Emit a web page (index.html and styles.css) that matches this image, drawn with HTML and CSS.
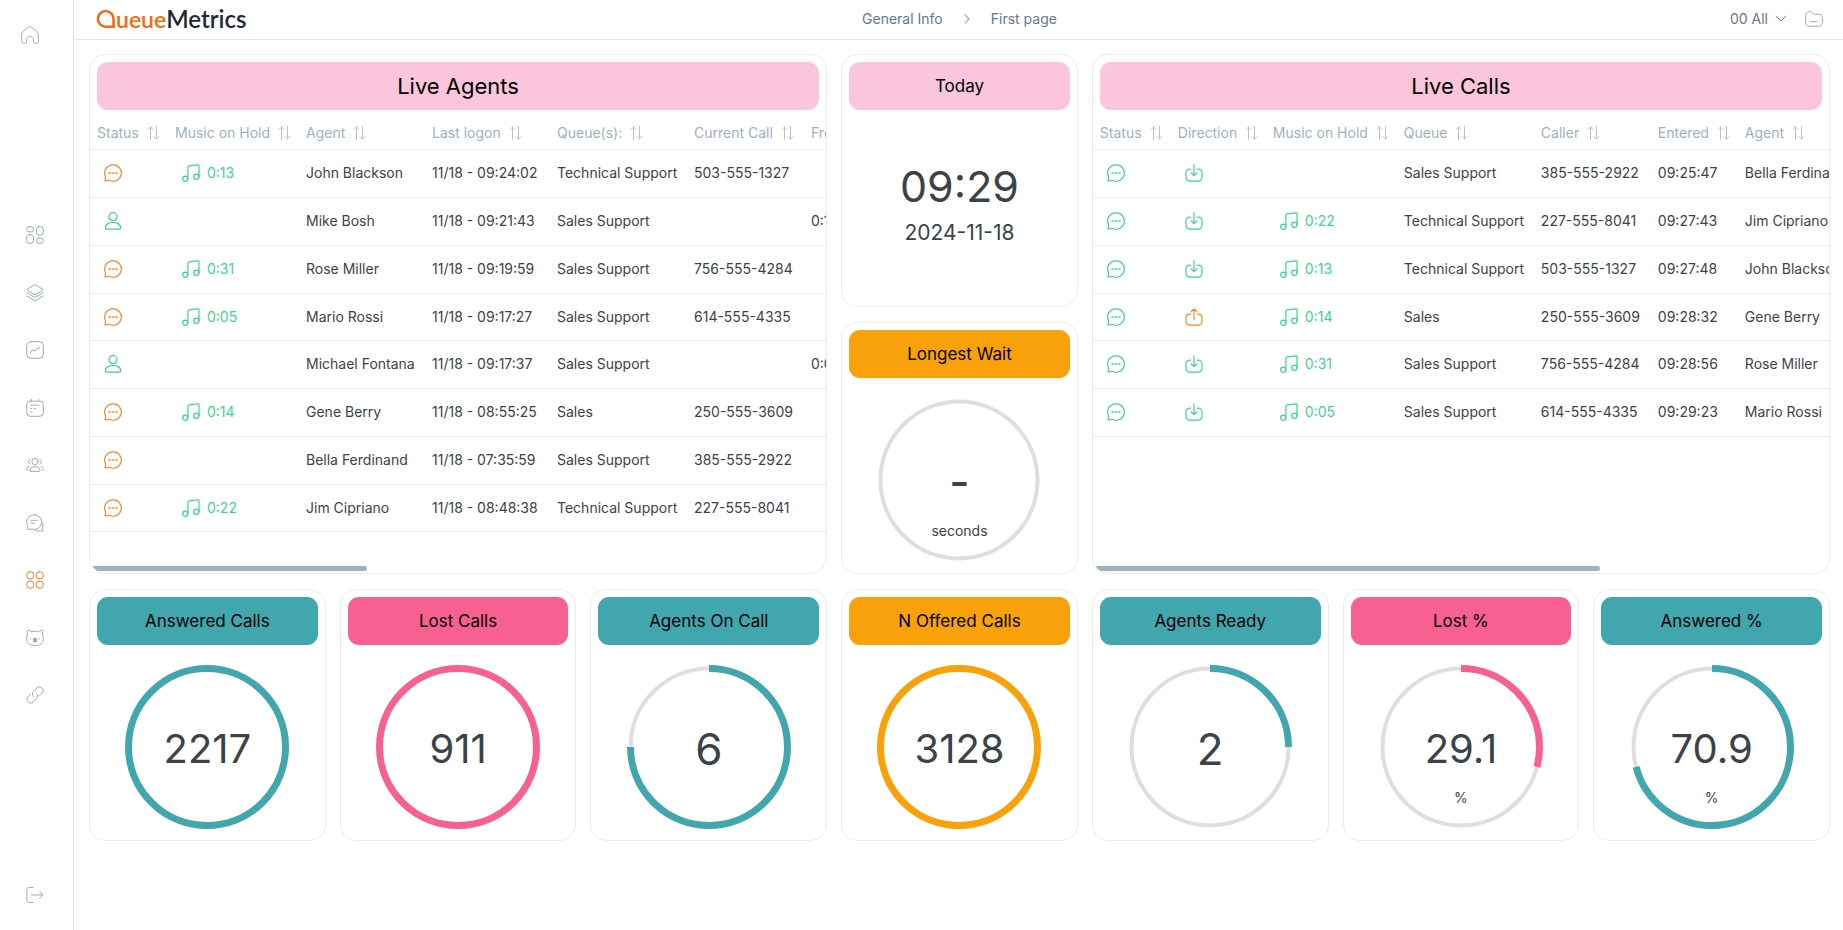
FILE: index.html
```html
<!DOCTYPE html>
<html lang="en">
<head>
<meta charset="utf-8">
<meta name="viewport" content="width=device-width, initial-scale=1">
<title>QueueMetrics - First page</title>
<link rel="stylesheet" href="styles.css">
</head>
<body>
<svg class="sprite" aria-hidden="true">
  <symbol id="i-sort" viewBox="0 0 13 14"><path d="M3.5 13.5V1M1 3.5 3.5 1 6 3.5M9.5.5V13M7 10.5 9.5 13l2.5-2.5"/></symbol>
  <symbol id="i-chat" viewBox="0 0 18 18"><path d="M9 .8a8.2 8.2 0 1 1-3.6 15.5c-1.200-.3-2.900 1-4.200.6-.6-.3-.1-1.200.2-2.300.3-1.100.2-1.700-.1-2.400A8.200 8.200 0 0 1 9 .8Z"/><path class="dots" d="M5.100 9h1M8.500 9h1M11.900 9h1"/></symbol>
  <symbol id="i-user" viewBox="0 0 18 18"><circle cx="9" cy="4.700" r="4"/><path d="M1.300 15.500c0-3 3.400-5 7.700-5s7.700 2 7.700 5c0 1-.6 1.700-1.700 1.700H3c-1.100 0-1.700-.7-1.700-1.700Z"/></symbol>
  <symbol id="i-music" viewBox="0 0 18 18"><circle cx="3.300" cy="14.800" r="2.600"/><circle cx="14.400" cy="12.700" r="2.600"/><path d="M5.900 14.800V3.500c0-.9.4-1.500 1.300-1.600l8.500-1.100c.8-.1 1.300.2 1.300 1v10.900"/></symbol>
  <symbol id="i-in" viewBox="0 0 18 18"><path d="M5.500 5.200C2 5.200 1 6.300 1 9.200v3.600c0 3.200 1.200 4.400 4.400 4.400h7.200c3.200 0 4.400-1.200 4.400-4.400V9.200c0-2.900-1-4-4.500-4M9 .8v10.600M6.300 9 9 11.600 11.700 9"/></symbol>
  <symbol id="i-out" viewBox="0 0 18 18"><path d="M5.500 6.200C2 6.200 1 7.300 1 9.700v3.300c0 3.100 1.200 4.200 4.400 4.200h7.200c3.200 0 4.400-1.100 4.400-4.200V9.700c0-2.400-1-3.500-4.500-3.500M9 11.800V1M6.300 3.500 9 .9l2.700 2.600"/></symbol>
</svg>

<div class="app">
  <aside class="sidebar">
    <a class="side-link home" href="#" aria-label="Home"><svg viewBox="0 0 18 18"><path d="M.7 8.200c0-1 .3-1.700 1-2.300L7 1.500c1.300-1.100 2.700-1.100 4 0l5.300 4.400c.7.6 1 1.300 1 2.300v6.600c0 1.700-.7 2.500-2.300 2.500h-1c-1 0-1.500-.5-1.500-1.500v-2c0-2-1.500-3.300-3.500-3.300s-3.500 1.300-3.500 3.300v2c0 1-.5 1.500-1.500 1.500H3c-1.600 0-2.300-.8-2.300-2.500Z"/></svg></a>
    <nav class="side-nav" aria-label="Main">
      <a class="side-link" href="#" aria-label="Dashboard"><svg viewBox="0 0 18 18"><rect x=".7" y=".7" width="6.800" height="5.200" rx="2.400"/><rect x="10.500" y=".7" width="6.800" height="8.600" rx="2.600"/><rect x=".7" y="8.700" width="6.800" height="8.600" rx="2.600"/><rect x="10.500" y="12.100" width="6.800" height="5.200" rx="2.400"/></svg></a>
      <a class="side-link" href="#" aria-label="Queues"><svg viewBox="0 0 18 18"><path d="M8 1.200c.7-.3 1.300-.3 2 0l6.700 3.900c.6.4.6.9 0 1.300L10 10.300c-.7.300-1.300.300-2 0L1.300 6.400c-.6-.4-.6-.9 0-1.300ZM.8 8.600 8 12.900c.7.300 1.300.300 2 0l7.200-4.300M.8 11.900 8 16.300c.7.300 1.300.300 2 0l7.200-4.400"/></svg></a>
      <a class="side-link" href="#" aria-label="Reports"><svg viewBox="0 0 18 18"><rect x=".7" y=".7" width="16.600" height="16.600" rx="4"/><path d="M4.300 11.800 6.800 9l2.300 1.200 2-2.700 1.200.5 1.700-2"/></svg></a>
      <a class="side-link" href="#" aria-label="Calendar"><svg viewBox="0 0 18 18"><rect x=".7" y="2.200" width="16.600" height="15.100" rx="3.500"/><path d="M5.300.4v1.500M12.700.4v1.500M5 6.200h8M4.800 9.500h1M8.500 9.500h1M4.800 12.700h1"/></svg></a>
      <a class="side-link" href="#" aria-label="Agents"><svg viewBox="0 0 18 18"><circle cx="9" cy="5.600" r="3.200"/><path d="M4 14.600c0-2.600 2.200-4 5-4s5 1.400 5 4c0 .5-.2.800-.8.800H4.800c-.6 0-.8-.3-.8-.8ZM4.100 3.500A2.400 2.400 0 0 0 4.100 8M13.900 3.500a2.400 2.400 0 0 1 0 4.500M2.900 10.500C1.500 11 .7 12 .6 13.600c0 .5.3.8.800.900M15.100 10.500c1.400.5 2.200 1.500 2.300 3.100 0 .5-.3.800-.8.900"/></svg></a>
      <a class="side-link" href="#" aria-label="Messages"><svg viewBox="0 0 18 18"><path d="M8.200.7a7.400 7.400 0 1 1-2.600 14.300c-1.300-.3-2.800.8-4.100.5-.6-.3-.1-1.100.1-2 .2-.8.100-1.300-.1-2A7.400 7.400 0 0 1 8.200.7ZM15.800 8.500c1.400 1.700 1.500 3.800.7 5.600-.2 1.100 1 2.500.4 3-.9.500-2-.5-3.100-.2-1.600.6-3.200.3-4.500-.9M5.200 6.300h6M5.200 9.200h3.300"/></svg></a>
      <a class="side-link active" href="#" aria-label="Wallboard" aria-current="page"><svg viewBox="0 0 18 18"><rect x=".8" y=".8" width="7" height="7" rx="2.800"/><rect x="10.200" y=".8" width="7" height="7" rx="2.800"/><rect x=".8" y="10.200" width="7" height="7" rx="2.800"/><rect x="10.200" y="10.200" width="7" height="7" rx="2.800"/></svg></a>
      <a class="side-link" href="#" aria-label="Assistant"><svg viewBox="0 0 18 18"><path d="M5.500 2.700C4.200 1.300 1.200.9 1 2.200c-.2 1 .1 2 .7 2.800C.8 7 .6 9.200.8 11.200c.3 3.300 3.500 5.300 8.200 5.300s7.900-2 8.200-5.300c.2-2 0-4.200-.9-6.200.6-.8.900-1.800.7-2.800-.2-1.300-3.200-.9-4.500.5-2-.6-5-.6-7 0ZM4.800 9.500v.4M13.200 9.500v.4"/><ellipse class="solid" cx="9" cy="11.200" rx="1.700" ry="2.100"/></svg></a>
      <a class="side-link" href="#" aria-label="Links"><svg viewBox="0 0 18 18"><path d="M7.500 10.500c-1.500-1.500-1.500-3.700 0-5.200L10.800 2c1.500-1.500 3.700-1.500 5.200 0s1.500 3.700 0 5.200l-2.600 2.600M10.500 7.500c1.500 1.500 1.500 3.700 0 5.200L7.200 16c-1.500 1.500-3.700 1.500-5.200 0s-1.500-3.700 0-5.200l2.600-2.600"/></svg></a>
    </nav>
    <a class="side-link" href="#" aria-label="Log out"><svg viewBox="0 0 18 18"><path d="M7 1.500H4C1.800 1.500.8 2.500.8 4.700v8.600c0 2.200 1 3.200 3.200 3.200h3M5.500 9h11.300M13.600 5.700 16.900 9l-3.300 3.300"/></svg></a>
  </aside>

  <div class="page">
    <header class="topbar">
      <a class="logo" href="#" aria-label="QueueMetrics"><svg viewBox="0 0 20 18" aria-hidden="true"><path d="M17.500 16.700H9.300a7.800 7.800 0 1 1 8.200-7.800Z"/><path class="fill" d="M18.800 12v6h-6.500c3 0 5.400-2.600 6.500-6Z"/></svg><span class="logo-a">ueue</span><span class="logo-b">Metrics</span></a>
      <nav class="crumbs" aria-label="Breadcrumb">
        <a href="#">General Info</a>
        <svg viewBox="0 0 6 10"><path d="M1 .8 5 5 1 9.200"/></svg>
        <a href="#">First page</a>
      </nav>
      <div class="tools">
        <button class="picker" type="button">00 All<svg viewBox="0 0 12 7"><path d="M1 1.200 6 5.800l5-4.600"/></svg></button>
        <button class="folder" type="button" aria-label="Folder"><svg viewBox="0 0 18 16"><path d="M.7 4c0-2 1-3.200 3-3.200h1.500c1 0 1.500.3 2.100 1l.8.9c.4.400.8.5 1.400.5h4.300c2.300 0 3.500 1.100 3.500 3.400v4.900c0 2.500-1.200 3.700-3.600 3.700H4.300C1.900 15.200.7 14 .7 11.500ZM6 10.700h6"/></svg></button>
      </div>
    </header>

    <main class="board">
      <section class="card wide">
        <h2 class="title blush large">Live Agents</h2>
        <div class="scroller">
          <table class="agents">
            <colgroup><col class="w78"><col class="w131"><col class="w126"><col class="w125"><col class="w137"><col class="w117"><col class="w131"></colgroup>
            <thead><tr>
              <th><button type="button">Status<svg><use href="#i-sort"/></svg></button></th>
              <th><button type="button">Music on Hold<svg><use href="#i-sort"/></svg></button></th>
              <th><button type="button">Agent<svg><use href="#i-sort"/></svg></button></th>
              <th><button type="button">Last logon<svg><use href="#i-sort"/></svg></button></th>
              <th><button type="button">Queue(s):<svg><use href="#i-sort"/></svg></button></th>
              <th><button type="button">Current Call<svg><use href="#i-sort"/></svg></button></th>
              <th><button type="button">Free<svg><use href="#i-sort"/></svg></button></th>
            </tr></thead>
            <tbody>
              <tr><td><span class="mark orange"><svg><use href="#i-chat"/></svg></span></td><td><span class="mark green"><svg><use href="#i-music"/></svg>0:13</span></td><td>John Blackson</td><td>11/18 - 09:24:02</td><td>Technical Support</td><td>503-555-1327</td><td></td></tr>
              <tr><td><span class="mark green"><svg><use href="#i-user"/></svg></span></td><td></td><td>Mike Bosh</td><td>11/18 - 09:21:43</td><td>Sales Support</td><td></td><td>0:14</td></tr>
              <tr><td><span class="mark orange"><svg><use href="#i-chat"/></svg></span></td><td><span class="mark green"><svg><use href="#i-music"/></svg>0:31</span></td><td>Rose Miller</td><td>11/18 - 09:19:59</td><td>Sales Support</td><td>756-555-4284</td><td></td></tr>
              <tr><td><span class="mark orange"><svg><use href="#i-chat"/></svg></span></td><td><span class="mark green"><svg><use href="#i-music"/></svg>0:05</span></td><td>Mario Rossi</td><td>11/18 - 09:17:27</td><td>Sales Support</td><td>614-555-4335</td><td></td></tr>
              <tr><td><span class="mark green"><svg><use href="#i-user"/></svg></span></td><td></td><td>Michael Fontana</td><td>11/18 - 09:17:37</td><td>Sales Support</td><td></td><td>0:08</td></tr>
              <tr><td><span class="mark orange"><svg><use href="#i-chat"/></svg></span></td><td><span class="mark green"><svg><use href="#i-music"/></svg>0:14</span></td><td>Gene Berry</td><td>11/18 - 08:55:25</td><td>Sales</td><td>250-555-3609</td><td></td></tr>
              <tr><td><span class="mark orange"><svg><use href="#i-chat"/></svg></span></td><td></td><td>Bella Ferdinand</td><td>11/18 - 07:35:59</td><td>Sales Support</td><td>385-555-2922</td><td></td></tr>
              <tr><td><span class="mark orange"><svg><use href="#i-chat"/></svg></span></td><td><span class="mark green"><svg><use href="#i-music"/></svg>0:22</span></td><td>Jim Cipriano</td><td>11/18 - 08:48:38</td><td>Technical Support</td><td>227-555-8041</td><td></td></tr>
            </tbody>
          </table>
        </div>
        <div class="track"><div class="thumb short"></div></div>
      </section>

      <section class="card">
        <h2 class="title blush">Today</h2>
        <div class="clock"><p class="time">09:29</p><p class="date">2024-11-18</p></div>
      </section>

      <section class="card wide">
        <h2 class="title blush large">Live Calls</h2>
        <div class="scroller">
          <table class="calls">
            <colgroup><col class="w78"><col class="w95"><col class="w131"><col class="w137"><col class="w117"><col class="w87"><col class="w131"></colgroup>
            <thead><tr>
              <th><button type="button">Status<svg><use href="#i-sort"/></svg></button></th>
              <th><button type="button">Direction<svg><use href="#i-sort"/></svg></button></th>
              <th><button type="button">Music on Hold<svg><use href="#i-sort"/></svg></button></th>
              <th><button type="button">Queue<svg><use href="#i-sort"/></svg></button></th>
              <th><button type="button">Caller<svg><use href="#i-sort"/></svg></button></th>
              <th><button type="button">Entered<svg><use href="#i-sort"/></svg></button></th>
              <th><button type="button">Agent<svg><use href="#i-sort"/></svg></button></th>
            </tr></thead>
            <tbody>
              <tr><td><span class="mark green"><svg><use href="#i-chat"/></svg></span></td><td><span class="mark green"><svg><use href="#i-in"/></svg></span></td><td></td><td>Sales Support</td><td>385-555-2922</td><td>09:25:47</td><td>Bella Ferdinand</td></tr>
              <tr><td><span class="mark green"><svg><use href="#i-chat"/></svg></span></td><td><span class="mark green"><svg><use href="#i-in"/></svg></span></td><td><span class="mark green"><svg><use href="#i-music"/></svg>0:22</span></td><td>Technical Support</td><td>227-555-8041</td><td>09:27:43</td><td>Jim Cipriano</td></tr>
              <tr><td><span class="mark green"><svg><use href="#i-chat"/></svg></span></td><td><span class="mark green"><svg><use href="#i-in"/></svg></span></td><td><span class="mark green"><svg><use href="#i-music"/></svg>0:13</span></td><td>Technical Support</td><td>503-555-1327</td><td>09:27:48</td><td>John Blackson</td></tr>
              <tr><td><span class="mark green"><svg><use href="#i-chat"/></svg></span></td><td><span class="mark orange"><svg><use href="#i-out"/></svg></span></td><td><span class="mark green"><svg><use href="#i-music"/></svg>0:14</span></td><td>Sales</td><td>250-555-3609</td><td>09:28:32</td><td>Gene Berry</td></tr>
              <tr><td><span class="mark green"><svg><use href="#i-chat"/></svg></span></td><td><span class="mark green"><svg><use href="#i-in"/></svg></span></td><td><span class="mark green"><svg><use href="#i-music"/></svg>0:31</span></td><td>Sales Support</td><td>756-555-4284</td><td>09:28:56</td><td>Rose Miller</td></tr>
              <tr><td><span class="mark green"><svg><use href="#i-chat"/></svg></span></td><td><span class="mark green"><svg><use href="#i-in"/></svg></span></td><td><span class="mark green"><svg><use href="#i-music"/></svg>0:05</span></td><td>Sales Support</td><td>614-555-4335</td><td>09:29:23</td><td>Mario Rossi</td></tr>
            </tbody>
          </table>
        </div>
        <div class="track"><div class="thumb long"></div></div>
      </section>

      <section class="card">
        <h2 class="title amber">Longest Wait</h2>
        <div class="gauge"><svg viewBox="0 0 164 164"><circle class="rail" cx="82" cy="82" r="78.500"/></svg><p class="value none">-</p><p class="unit">seconds</p></div>
      </section>

      <section class="card">
        <h2 class="title teal">Answered Calls</h2>
        <div class="gauge"><svg viewBox="0 0 164 164"><circle class="rail" cx="82" cy="82" r="78.500"/><circle class="arc teal" cx="82" cy="82" r="78.500"/></svg><p class="value">2217</p></div>
      </section>
      <section class="card">
        <h2 class="title pink">Lost Calls</h2>
        <div class="gauge"><svg viewBox="0 0 164 164"><circle class="rail" cx="82" cy="82" r="78.500"/><circle class="arc pink" cx="82" cy="82" r="78.500"/></svg><p class="value">911</p></div>
      </section>
      <section class="card">
        <h2 class="title teal">Agents On Call</h2>
        <div class="gauge"><svg viewBox="0 0 164 164"><circle class="rail" cx="82" cy="82" r="78.500"/><circle class="arc teal" cx="82" cy="82" r="78.500" pathLength="100" stroke-dasharray="75 100"/></svg><p class="value single">6</p></div>
      </section>
      <section class="card">
        <h2 class="title amber">N Offered Calls</h2>
        <div class="gauge"><svg viewBox="0 0 164 164"><circle class="rail" cx="82" cy="82" r="78.500"/><circle class="arc amber" cx="82" cy="82" r="78.500"/></svg><p class="value">3128</p></div>
      </section>
      <section class="card">
        <h2 class="title teal">Agents Ready</h2>
        <div class="gauge"><svg viewBox="0 0 164 164"><circle class="rail" cx="82" cy="82" r="78.500"/><circle class="arc teal" cx="82" cy="82" r="78.500" pathLength="100" stroke-dasharray="25 100"/></svg><p class="value single">2</p></div>
      </section>
      <section class="card">
        <h2 class="title pink">Lost %</h2>
        <div class="gauge"><svg viewBox="0 0 164 164"><circle class="rail" cx="82" cy="82" r="78.500"/><circle class="arc pink" cx="82" cy="82" r="78.500" pathLength="100" stroke-dasharray="29.100 100"/></svg><p class="value">29.1</p><p class="unit">%</p></div>
      </section>
      <section class="card">
        <h2 class="title teal">Answered %</h2>
        <div class="gauge"><svg viewBox="0 0 164 164"><circle class="rail" cx="82" cy="82" r="78.500"/><circle class="arc teal" cx="82" cy="82" r="78.500" pathLength="100" stroke-dasharray="70.900 100"/></svg><p class="value">70.9</p><p class="unit">%</p></div>
      </section>
    </main>
  </div>
</div>
</body>
</html>
```
FILE: styles.css
```css
:root {
  --teal: #41a6ae;
  --pink: #f76091;
  --amber: #f8a10a;
  --blush: #fbc5db;
  --green: #3dd586;
  --orange: #fb8624;
  --line: #e7edee;
  --muted: #a0b0c0;
  --ink: #3c424a;
}

* { box-sizing: border-box; }

body {
  margin: 0;
  background: #fff;
  color: var(--ink);
  font: 14px/20px Inter, "Open Sans", sans-serif;
}

h2, p { margin: 0; font-weight: 400; }
a { color: inherit; text-decoration: none; }
button { margin: 0; padding: 0; border: 0; background: none; color: inherit; font: inherit; cursor: pointer; }
svg { display: block; fill: none; stroke: currentColor; stroke-linecap: round; stroke-linejoin: round; }
.sprite { position: absolute; width: 0; height: 0; }

.app { display: flex; min-height: 100vh; }

/* Sidebar */
.sidebar {
  display: flex;
  flex-direction: column;
  flex: none;
  align-items: center;
  width: 74px;
  padding: 15px 4px 15px 0;
  border-right: 1px solid #e3e5e6;
  color: #9aabba;
}
.side-nav {
  display: flex;
  flex-direction: column;
  justify-content: space-between;
  min-height: 500px;
  margin: 160px 0 auto;
}
.side-link { display: grid; place-items: center; width: 40px; height: 40px; }
.side-link svg { width: 18px; height: 18px; }
.side-link.home { align-self: flex-start; margin-left: 10px; color: #a9a9ad; }
.side-link.active { color: #fb7d24; }
.solid { fill: currentColor; }

/* Top bar */
.page { flex: 1; min-width: 0; }
.topbar {
  display: grid;
  grid-template-columns: 1fr auto 1fr;
  align-items: center;
  height: 40px;
  padding: 0 20px 2px 22px;
  border-bottom: 1px solid #e3e5e6;
  color: #66788a;
}
.logo { display: flex; align-items: center; font: 600 23px/30px Lato, sans-serif; }
.logo svg { width: 20px; height: 18px; color: #f7690f; stroke-width: 2.500; stroke-linejoin: miter; }
.logo .fill { fill: currentColor; stroke: none; }
.logo-a { color: #f7690f; }
.logo-b { color: #1f2836; font-size: 24px; }
.crumbs { display: flex; align-items: center; gap: 21px; }
.crumbs svg { width: 6px; height: 10px; color: #9aabba; stroke-width: 1.200; }
.tools { display: flex; justify-content: flex-end; align-items: center; gap: 18px; }
.picker { display: flex; align-items: center; gap: 7px; }
.picker svg { width: 12px; height: 7px; }
.folder svg { width: 18px; height: 16px; color: #9aabba; }

/* Board */
.board {
  display: grid;
  grid-template-columns: repeat(7, minmax(0, 1fr));
  grid-template-rows: minmax(253px, auto) repeat(2, minmax(252px, auto));
  gap: 15px 14px;
  padding: 14px 13px 14px 15px;
}
.card {
  display: flex;
  flex-direction: column;
  min-width: 0;
  overflow: hidden;
  border: 1px solid var(--line);
  border-radius: 16px;
}
.card.wide { grid-column: span 3; grid-row: span 2; }
.title {
  margin: 7px 7px 0;
  border-radius: 11px;
  color: #000;
  font-size: 17px;
  line-height: 48px;
  text-align: center;
}
.title.large { font-size: 22px; }
.title.blush { background: var(--blush); }
.title.teal { background: var(--teal); }
.title.pink { background: var(--pink); }
.title.amber { background: var(--amber); }

/* Tables */
.scroller { flex: 1; overflow: hidden; }
table { border-collapse: collapse; table-layout: fixed; }
table.agents { width: 845px; }
table.calls { width: 776px; }
.w78 { width: 78px; }
.w87 { width: 87px; }
.w95 { width: 95px; }
.w117 { width: 117px; }
.w125 { width: 125px; }
.w126 { width: 126px; }
.w131 { width: 131px; }
.w137 { width: 137px; }
th, td { padding: 0 0 0 7px; border-bottom: 1px solid var(--line); text-align: left; white-space: nowrap; }
th { height: 39px; padding-top: 8px; color: var(--muted); font-weight: 400; }
td { height: 48px; }
tr:nth-child(4n) td { height: 47px; }
th button { display: flex; align-items: center; gap: 8px; }
th svg { width: 13px; height: 14px; color: #bcbfc3; }
.mark { display: flex; align-items: center; gap: 7px; padding-left: 7px; }
.mark svg { width: 18px; height: 18px; stroke-width: 1.200; }
.dots { stroke-width: 1.700; }
.green { color: var(--green); }
.orange { color: var(--orange); }

.track { height: 5px; margin: 0 2px 2px; }
.thumb { height: 5px; border-radius: 3px; background: #a2b0bd; }
.thumb.short { width: 37.5%; }
.thumb.long { width: 69%; }

/* Clock */
.clock { display: flex; flex-direction: column; flex: 1; justify-content: center; padding-bottom: 6px; text-align: center; }
.time { font-size: 43px; line-height: 56px; }
.date { font-size: 21px; line-height: 38px; }

/* Gauges */
.gauge { display: grid; flex: 1; place-items: center; padding: 19px 0 11px; }
.gauge > * { grid-area: 1 / 1; }
.gauge svg { width: 164px; height: 164px; transform: rotate(-90deg); stroke-linecap: butt; }
.rail { stroke: #dedede; stroke-width: 4; }
.arc { stroke-width: 7; }
.arc.teal { stroke: var(--teal); }
.arc.pink { stroke: var(--pink); }
.arc.amber { stroke: var(--amber); }
.value { padding-top: 5px; font-size: 40px; line-height: 48px; }
.value.single { font-size: 44px; }
.value.none { font-size: 44px; font-weight: 500; }
.unit { padding-top: 102px; }
```
